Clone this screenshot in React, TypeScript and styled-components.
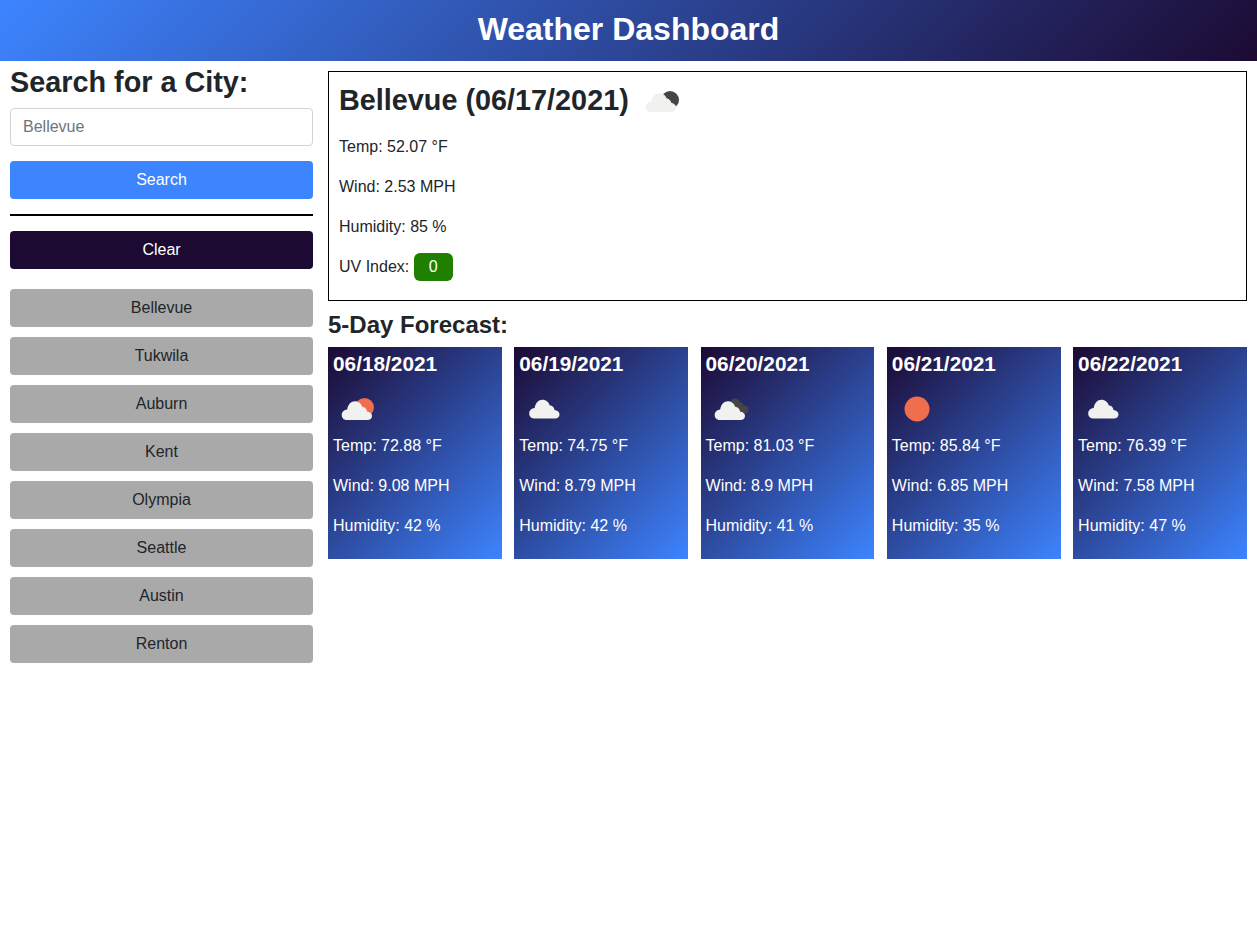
import React from 'react';
import styled, { createGlobalStyle } from 'styled-components';

type IconKind = 'nightCloud' | 'sunCloud' | 'cloud' | 'darkCloud' | 'sun';

interface IForecast {
    date: string;
    icon: IconKind;
    temp: string;
    wind: string;
    humidity: string;
}

const cities = ['Bellevue', 'Tukwila', 'Auburn', 'Kent', 'Olympia', 'Seattle', 'Austin', 'Renton'];

const forecast: IForecast[] = [
    { date: '06/18/2021', icon: 'sunCloud', temp: '72.88', wind: '9.08', humidity: '42' },
    { date: '06/19/2021', icon: 'cloud', temp: '74.75', wind: '8.79', humidity: '42' },
    { date: '06/20/2021', icon: 'darkCloud', temp: '81.03', wind: '8.9', humidity: '41' },
    { date: '06/21/2021', icon: 'sun', temp: '85.84', wind: '6.85', humidity: '35' },
    { date: '06/22/2021', icon: 'cloud', temp: '76.39', wind: '7.58', humidity: '47' },
];

const CLOUD =
    'M14 36 C10.5 36 8.7 33.8 8.7 31 C8.7 28 11 25.8 14.2 25.6 C14.8 20.5 18 17.2 22 17.2 C25.6 17.2 28.4 19.8 29.4 23 C31.5 22.8 33.6 24.6 34 27.4 C36.8 27.6 39 29.5 39 32 C39 34.5 37 36 34.5 36 Z';

const WeatherIcon: React.FunctionComponent<{ kind: IconKind }> = ({ kind }) => (
    <svg width="50" height="50" viewBox="0 0 50 50">
        {kind === 'nightCloud' && <circle cx="33" cy="24" r="9" fill="#454545" />}
        {kind === 'sunCloud' && <circle cx="31.5" cy="23.5" r="9.5" fill="#ee6e4d" />}
        {kind === 'darkCloud' && (
            <g fill="#454545">
                <circle cx="29" cy="19.5" r="5" />
                <circle cx="33.5" cy="22" r="4" />
                <circle cx="38.5" cy="25.5" r="4" />
                <rect x="28" y="22" width="10" height="8" />
            </g>
        )}
        {kind === 'sun' && <circle cx="25" cy="25" r="12.5" fill="#ee6e4d" />}
        {kind === 'nightCloud' && <path d={CLOUD} fill="#f1f1ef" stroke="#fff" strokeWidth="1" paintOrder="stroke" />}
        {(kind === 'sunCloud' || kind === 'darkCloud') && <path d={CLOUD} fill="#f1f1ef" />}
        {kind === 'cloud' && <path d={CLOUD} fill="#f1f1ef" transform="translate(1.5 -1.5)" />}
    </svg>
);

const App: React.FunctionComponent = () => (
    <>
        <GlobalStyle />
        <Header>
            <Title>Weather Dashboard</Title>
        </Header>
        <Page>
            <Sidebar>
                <SearchTitle>Search for a City:</SearchTitle>
                <CityInput readOnly placeholder="Bellevue" />
                <ActionButton $bg="#3d84ff">Search</ActionButton>
                <Divider />
                <ActionButton $bg="#1c0a33">Clear</ActionButton>
                <CityList>
                    {cities.map((city) => (
                        <CityButton key={city}>{city}</CityButton>
                    ))}
                </CityList>
            </Sidebar>
            <Main>
                <Current>
                    <CityHeading>
                        Bellevue (06/17/2021)
                        <CurrentIcon>
                            <WeatherIcon kind="nightCloud" />
                        </CurrentIcon>
                    </CityHeading>
                    <Stat>Temp: 52.07 °F</Stat>
                    <Stat>Wind: 2.53 MPH</Stat>
                    <Stat>Humidity: 85 %</Stat>
                    <Stat>
                        UV Index: <UvBadge>0</UvBadge>
                    </Stat>
                </Current>
                <ForecastTitle>5-Day Forecast:</ForecastTitle>
                <CardRow>
                    {forecast.map((day) => (
                        <Card key={day.date}>
                            <CardDate>{day.date}</CardDate>
                            <CardIcon>
                                <WeatherIcon kind={day.icon} />
                            </CardIcon>
                            <Stat>Temp: {day.temp} °F</Stat>
                            <Stat>Wind: {day.wind} MPH</Stat>
                            <Stat>Humidity: {day.humidity} %</Stat>
                        </Card>
                    ))}
                </CardRow>
            </Main>
        </Page>
    </>
);

export default App;

const GlobalStyle = createGlobalStyle`
    * {
        box-sizing: border-box;
    }
    body {
        margin: 0;
        background: #fff;
        color: #212529;
        font-family: "Liberation Sans", Arial, sans-serif;
        font-size: 16px;
        line-height: 1.5;
    }
`;

const Header = styled.header`
    height: 61px;
    display: flex;
    align-items: center;
    justify-content: center;
    background: linear-gradient(135deg, #3d84ff, #1c0a33);
`;

const Title = styled.h1`
    margin: 0 0 2px;
    color: #fff;
    font-size: 32px;
    font-weight: 700;
    line-height: 1.2;
`;

const Page = styled.div`
    display: flex;
    gap: 15px;
    padding: 0 10px;
`;

const Sidebar = styled.aside`
    width: 303px;
    flex: none;
    display: flex;
    flex-direction: column;
`;

const SearchTitle = styled.h2`
    margin: 4px 0 8px;
    font-size: 28.8px;
    font-weight: 700;
    line-height: 35px;
`;

const CityInput = styled.input`
    height: 38px;
    padding: 6px 12px;
    border: 1px solid #ced4da;
    border-radius: 4px;
    font: inherit;
    &::placeholder {
        color: #6c757d;
    }
`;

const ActionButton = styled.button<{ $bg: string }>`
    height: 38px;
    margin-top: 15px;
    border: 0;
    border-radius: 4px;
    background: ${(p) => p.$bg};
    color: #fff;
    font: inherit;
`;

const Divider = styled.hr`
    width: 100%;
    height: 2px;
    margin: 15px 0 0;
    border: 0;
    background: #000;
`;

const CityList = styled.div`
    display: flex;
    flex-direction: column;
    gap: 10px;
    margin-top: 20px;
`;

const CityButton = styled.button`
    height: 38px;
    border: 0;
    border-radius: 4px;
    background: #a9a9a9;
    color: #212529;
    font: inherit;
`;

const Main = styled.main`
    flex: 1;
    min-width: 0;
    padding-top: 10px;
`;

const Current = styled.section`
    height: 230px;
    padding: 9px 10px;
    border: 1px solid #000;
`;

const CityHeading = styled.h2`
    display: flex;
    align-items: center;
    height: 38px;
    margin: 0 0 16px;
    font-size: 28.8px;
    font-weight: 700;
    line-height: 38px;
`;

const CurrentIcon = styled.span`
    display: flex;
    margin: 2px 0 0 8px;
`;

const Stat = styled.p`
    margin: 0 0 16px;
    line-height: 24px;
`;

const UvBadge = styled.span`
    display: inline-block;
    width: 39px;
    height: 28px;
    margin: -4px 0;
    border-radius: 6px;
    background: #1f7f00;
    color: #fff;
    line-height: 28px;
    text-align: center;
`;

const ForecastTitle = styled.h3`
    margin: 9px 0 8px;
    font-size: 24px;
    font-weight: 700;
    line-height: 29px;
`;

const CardRow = styled.div`
    display: grid;
    grid-template-columns: repeat(5, 1fr);
    gap: 12.4px;
`;

const Card = styled.article`
    height: 212px;
    padding: 5px;
    background: linear-gradient(135deg, #1c0a33, #3d84ff);
    color: #fff;
`;

const CardDate = styled.h4`
    margin: 0;
    font-size: 20.8px;
    font-weight: 700;
    line-height: 24px;
`;

const CardIcon = styled.div`
    height: 50px;
    margin-top: 8px;
`;
